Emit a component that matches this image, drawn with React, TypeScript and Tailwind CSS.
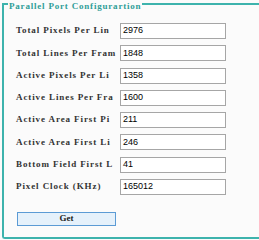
const rows: [string, string][] = [
  ["Total Pixels Per Lin", "2976"],
  ["Total Lines Per Fram", "1848"],
  ["Active Pixels Per Li", "1358"],
  ["Active Lines Per Fra", "1600"],
  ["Active Area First Pi", "211"],
  ["Active Area First Li", "246"],
  ["Bottom Field First L", "41"],
  ["Pixel Clock (KHz)", "165012"],
];

const App = () => {
  return (
    <div className="w-[259px] h-[240px] bg-[#fbfbfb] overflow-hidden">
      <div className="relative ml-[2px] mt-[3px] w-[275px] h-[236px] border-l-2 border-t-2 border-b-2 border-[#3db3ad] rounded-bl-[3px]">
        <span className="absolute left-[4px] top-[-4px] px-[1px] bg-[#fbfbfb] text-[#2f9e98] text-[9px] leading-[11px] tracking-[0.8px] font-bold font-['Liberation_Serif',serif]">
          Parallel Port Configurartion
        </span>
        <div className="flex flex-col gap-[6.3px] pt-[18px] pl-[12px]">
          {rows.map(([label, value]) => (
            <div key={label} className="flex items-center h-[16px]">
              <div className="w-[104px] text-[9px] tracking-[0.9px] font-bold text-[#333] font-['Liberation_Serif',serif] whitespace-nowrap">
                {label}
              </div>
              <div className="w-[106px] h-[16px] border border-[#a6a6a6] bg-white flex items-center pl-[2px] text-[9px] text-black font-['Liberation_Sans',sans-serif]">
                {value}
              </div>
            </div>
          ))}
        </div>
        <button className="ml-[13px] mt-[17px] w-[99px] h-[14px] border border-[#5b9bd5] bg-[#e5f1fb] flex items-center justify-center text-[9px] font-bold text-[#222] font-['Liberation_Serif',serif]">
          Get
        </button>
      </div>
    </div>
  );
};

export default App;
